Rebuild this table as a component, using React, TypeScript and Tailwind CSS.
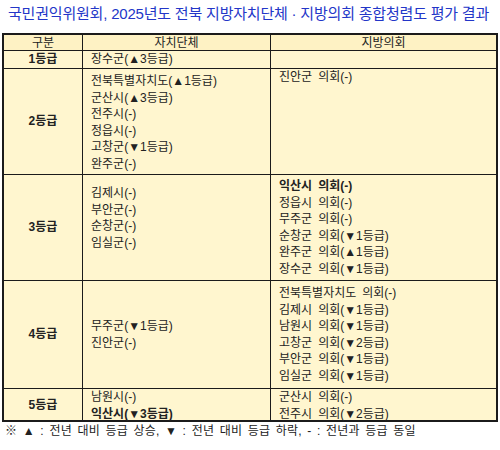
import React from 'react'

const font = { fontFamily: '"Liberation Sans", "Noto Sans CJK KR", sans-serif' }

type Item = { name: string; change: string; bold?: boolean }

const Line = ({ item, council }: { item: Item; council?: boolean }) => (
  <div className={item.bold ? 'font-bold' : ''}>
    {item.name}
    {council ? <span className="ml-[6px]">의회({item.change})</span> : <span>({item.change})</span>}
  </div>
)

const rows: {
  grade: string
  h: string
  local: Item[]
  council: Item[]
  localCls: string
  councilCls: string
}[] = [
  {
    grade: '1등급',
    h: 'h-[18px]',
    local: [{ name: '장수군', change: '▲3등급' }],
    council: [],
    localCls: 'justify-center',
    councilCls: 'justify-center',
  },
  {
    grade: '2등급',
    h: 'h-[106px]',
    local: [
      { name: '전북특별자치도', change: '▲1등급' },
      { name: '군산시', change: '▲3등급' },
      { name: '전주시', change: '-' },
      { name: '정읍시', change: '-' },
      { name: '고창군', change: '▼1등급' },
      { name: '완주군', change: '-' },
    ],
    council: [{ name: '진안군', change: '-' }],
    localCls: 'justify-center pt-[2px]',
    councilCls: 'justify-start',
  },
  {
    grade: '3등급',
    h: 'h-[106px]',
    local: [
      { name: '김제시', change: '-' },
      { name: '부안군', change: '-' },
      { name: '순창군', change: '-' },
      { name: '임실군', change: '-' },
    ],
    council: [
      { name: '익산시', change: '-', bold: true },
      { name: '정읍시', change: '-' },
      { name: '무주군', change: '-' },
      { name: '순창군', change: '▼1등급' },
      { name: '완주군', change: '▲1등급' },
      { name: '장수군', change: '▼1등급' },
    ],
    localCls: 'justify-start pt-[10px]',
    councilCls: 'justify-center',
  },
  {
    grade: '4등급',
    h: 'h-[108px]',
    local: [
      { name: '무주군', change: '▼1등급' },
      { name: '진안군', change: '-' },
    ],
    council: [
      { name: '전북특별자치도', change: '-' },
      { name: '김제시', change: '▼1등급' },
      { name: '남원시', change: '▼1등급' },
      { name: '고창군', change: '▼2등급' },
      { name: '부안군', change: '▼1등급' },
      { name: '임실군', change: '▼1등급' },
    ],
    localCls: 'justify-center',
    councilCls: 'justify-center',
  },
  {
    grade: '5등급',
    h: 'h-[31px]',
    local: [
      { name: '남원시', change: '-' },
      { name: '익산시', change: '▼3등급', bold: true },
    ],
    council: [
      { name: '군산시', change: '-' },
      { name: '전주시', change: '▼2등급' },
    ],
    localCls: 'justify-start',
    councilCls: 'justify-start',
  },
]

export default function App() {
  return (
    <div className="w-[500px] h-[450px] bg-white text-[#222] overflow-hidden" style={font}>
      {/* Title */}
      <h1 className="pt-[4px] pl-[8px] text-[15px] leading-[20px] text-[#2336c8] tracking-[-0.2px] whitespace-nowrap">
        국민권익위원회, 2025년도 전북 지방자치단체 · 지방의회 종합청렴도 평가 결과
      </h1>

      {/* Table */}
      <div className="mt-[9px] ml-[2px] w-[496px] border-2 border-[#1b1b1b] bg-[#fff6cf] text-[12px] leading-[16.5px]">
        <div className="grid grid-cols-[79px_188px_1fr] h-[16px] border-b border-[#1b1b1b] bg-[#fef2c4]">
          <div className="border-r border-[#1b1b1b] flex items-center justify-center">구분</div>
          <div className="border-r border-[#1b1b1b] flex items-center justify-center">자치단체</div>
          <div className="flex items-center justify-center">지방의회</div>
        </div>
        {rows.map((r, i) => (
          <div
            key={r.grade}
            className={`grid grid-cols-[79px_188px_1fr] ${r.h} ${i < rows.length - 1 ? 'border-b border-[#1b1b1b]' : ''}`}
          >
            <div className="border-r border-[#1b1b1b] flex items-center justify-center font-bold">{r.grade}</div>
            <div className={`border-r border-[#1b1b1b] flex flex-col pl-[8px] overflow-visible ${r.localCls}`}>
              {r.local.map(item => (
                <Line key={item.name} item={item} />
              ))}
            </div>
            <div className={`flex flex-col pl-[8px] ${r.councilCls}`}>
              {r.council.map(item => (
                <Line key={item.name} item={item} council />
              ))}
            </div>
          </div>
        ))}
      </div>

      {/* Legend */}
      <p className="pl-[5px] pt-[1px] text-[12px] leading-[16px] text-[#222] tracking-[0.2px] [word-spacing:2px] whitespace-pre">
        ※ ▲ : 전년 대비 등급 상승, ▼ : 전년 대비 등급 하락, - : 전년과 등급 동일
      </p>
    </div>
  )
}
